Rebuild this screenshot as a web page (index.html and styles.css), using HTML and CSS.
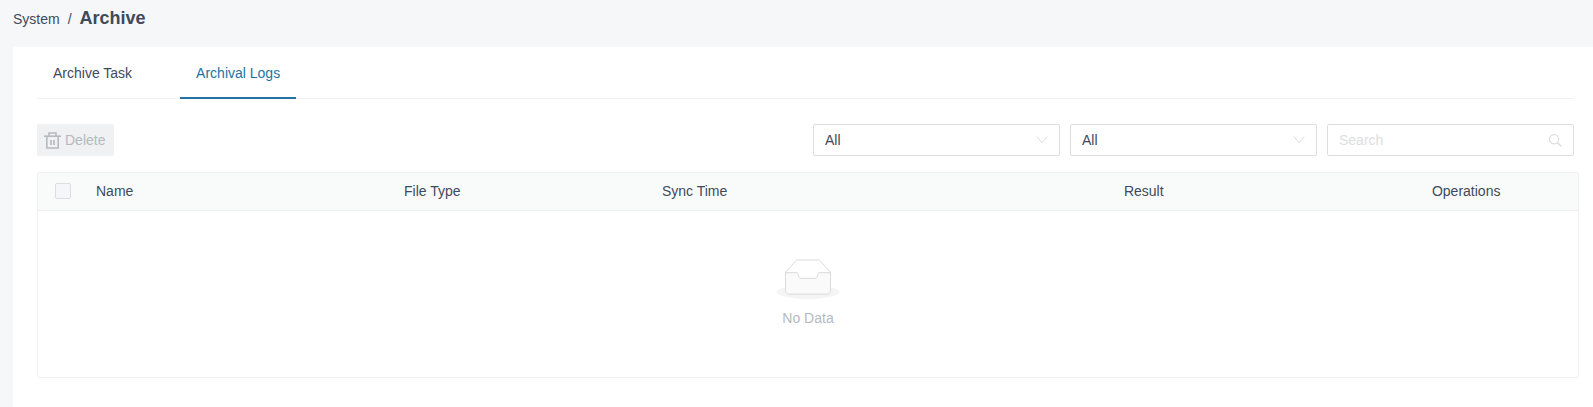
FILE: index.html
```html
<!DOCTYPE html>
<html lang="en">
<head>
    <meta charset="UTF-8">
    <meta name="viewport" content="width=device-width, initial-scale=1.0">
    <title>Archive</title>
    <link rel="stylesheet" href="styles.css">
</head>
<body>
    <nav class="breadcrumb" aria-label="Breadcrumb">
        <a href="#">System</a>
        <span>/</span>
        <h1>Archive</h1>
    </nav>

    <main class="card">
        <div class="tabs" role="tablist">
            <button type="button" class="tab" role="tab" aria-selected="false">Archive Task</button>
            <button type="button" class="tab active" role="tab" aria-selected="true">Archival Logs</button>
        </div>

        <form class="toolbar">
            <button type="button" class="delete-btn" disabled>
                <svg width="17" height="17" viewBox="0 0 17 17" fill="none" stroke="currentColor" aria-hidden="true">
                    <path d="M0 4.2h17" stroke-width="1.6"/>
                    <path d="M5 4V1h7v3" stroke-width="1.6"/>
                    <path d="M2.8 4v12h11.4V4" stroke-width="1.6"/>
                    <path d="M7 8v5M10 8v5" stroke-width="1.6"/>
                </svg>
                Delete
            </button>
            <div class="filters">
                <div class="field">
                    <select aria-label="File type">
                        <option>All</option>
                    </select>
                    <svg class="field-icon" width="12" height="12" viewBox="0 0 12 12" fill="none" stroke="currentColor" aria-hidden="true">
                        <path d="M1 2.5l5 6.5 5-6.5"/>
                    </svg>
                </div>
                <div class="field">
                    <select aria-label="Result">
                        <option>All</option>
                    </select>
                    <svg class="field-icon" width="12" height="12" viewBox="0 0 12 12" fill="none" stroke="currentColor" aria-hidden="true">
                        <path d="M1 2.5l5 6.5 5-6.5"/>
                    </svg>
                </div>
                <div class="field">
                    <input type="text" placeholder="Search" aria-label="Search">
                    <svg class="field-icon search" width="14" height="14" viewBox="0 0 14 14" fill="none" stroke="currentColor" aria-hidden="true">
                        <circle cx="6" cy="5.2" r="4.6" stroke-width="1.2"/>
                        <path d="M9.2 8.4l4 4" stroke-width="1.6"/>
                    </svg>
                </div>
            </div>
        </form>

        <table class="logs">
            <thead>
                <tr>
                    <th class="col-check"><input type="checkbox" aria-label="Select all" disabled></th>
                    <th class="col-name">Name</th>
                    <th class="col-type">File Type</th>
                    <th class="col-time">Sync Time</th>
                    <th class="col-result">Result</th>
                    <th>Operations</th>
                </tr>
            </thead>
            <tbody>
                <tr>
                    <td colspan="6">
                        <div class="empty">
                            <svg width="64" height="40" viewBox="0 0 64 41" aria-hidden="true">
                                <g transform="translate(0 1)" fill="none">
                                    <ellipse fill="#f5f5f5" cx="32" cy="33" rx="32" ry="7"/>
                                    <g stroke="#d9d9d9">
                                        <path d="M55 12.76L44.854 1.258C44.367.474 43.656 0 42.907 0H21.093c-.749 0-1.46.474-1.947 1.257L9 12.761V22h46v-9.24z"/>
                                        <path fill="#fafafa" d="M41.613 15.931c0-1.605.994-2.93 2.227-2.931H55v18.137C55 33.26 53.68 35 52.05 35h-40.1C10.32 35 9 33.259 9 31.137V13h11.16c1.233 0 2.227 1.323 2.227 2.928v.022c0 1.605 1.005 2.901 2.237 2.901h14.752c1.232 0 2.237-1.308 2.237-2.913v-.007z"/>
                                    </g>
                                </g>
                            </svg>
                            <p>No Data</p>
                        </div>
                    </td>
                </tr>
            </tbody>
        </table>
    </main>
</body>
</html>
```
FILE: styles.css
```css
* {
    box-sizing: border-box;
}

body {
    margin: 0;
    min-height: 100vh;
    display: flex;
    flex-direction: column;
    padding-left: 13px;
    font-family: "Liberation Sans", Arial, sans-serif;
    font-size: 14px;
    line-height: 22px;
    color: #3f4a5c;
    background-color: #f5f7f9;
}

button, input, select {
    font: inherit;
    color: inherit;
}

.breadcrumb {
    display: flex;
    align-items: baseline;
    gap: 8px;
    padding: 7px 0 17px;
}

.breadcrumb a {
    color: inherit;
    text-decoration: none;
}

.breadcrumb h1 {
    margin: 0;
    font-size: 18px;
    line-height: 22px;
}

.card {
    flex: 1;
    padding: 0 14px 28px 24px;
    background-color: #fff;
    border-top-left-radius: 2px;
}

/* tabs */
.tabs {
    display: flex;
    gap: 32px;
    margin-right: 6px;
    border-bottom: 1px solid #eff0f1;
}

.tab {
    height: 52px;
    margin-bottom: -1px;
    padding: 2px 16px 0;
    border: none;
    border-bottom: 2px solid transparent;
    background: none;
    cursor: pointer;
}

.tab.active {
    color: #2372a3;
    border-bottom-color: #2372a3;
}

/* toolbar */
.toolbar {
    display: flex;
    justify-content: space-between;
    margin: 25px 5px 16px 0;
}

.delete-btn {
    display: flex;
    align-items: center;
    gap: 4px;
    height: 32px;
    padding: 0 9px 0 7px;
    border: none;
    border-radius: 2px;
    color: #b5b9c0;
    background-color: #eff1f3;
}

.filters {
    display: flex;
    gap: 10px;
}

.field {
    position: relative;
    width: 247px;
}

.field select,
.field input {
    display: block;
    width: 100%;
    height: 32px;
    padding: 0 11px;
    border: 1px solid #dcdee0;
    border-radius: 2px;
    background-color: #fff;
    appearance: none;
}

.field input::placeholder {
    color: #dcdee2;
}

.field-icon {
    position: absolute;
    top: 10px;
    right: 12px;
    color: #dcdee2;
    pointer-events: none;
}

/* table */
.logs {
    width: 100%;
    table-layout: fixed;
    border: 1px solid #eff0f1;
    border-radius: 2px;
    border-spacing: 0;
}

.logs th {
    height: 38px;
    padding: 0 8px 2px;
    font-weight: normal;
    text-align: left;
    background-color: #f9fbfa;
    border-bottom: 1px solid #eff0f1;
}

.logs td {
    padding: 16px;
}

.logs .col-check {
    width: 50px;
    text-align: center;
}

.col-name, .col-result {
    width: 20%;
}

.col-type {
    width: 16.75%;
}

.col-time {
    width: 30%;
}

.logs input[type="checkbox"] {
    display: block;
    width: 16px;
    height: 16px;
    margin: 0 auto;
    border: 1px solid #dcdee2;
    border-radius: 2px;
    background-color: #f5f6f8;
    appearance: none;
}

.empty {
    display: flex;
    flex-direction: column;
    align-items: center;
    gap: 8px;
    margin: 32px 0;
    color: #b5b9c0;
}

.empty p {
    margin: 0;
}
```
